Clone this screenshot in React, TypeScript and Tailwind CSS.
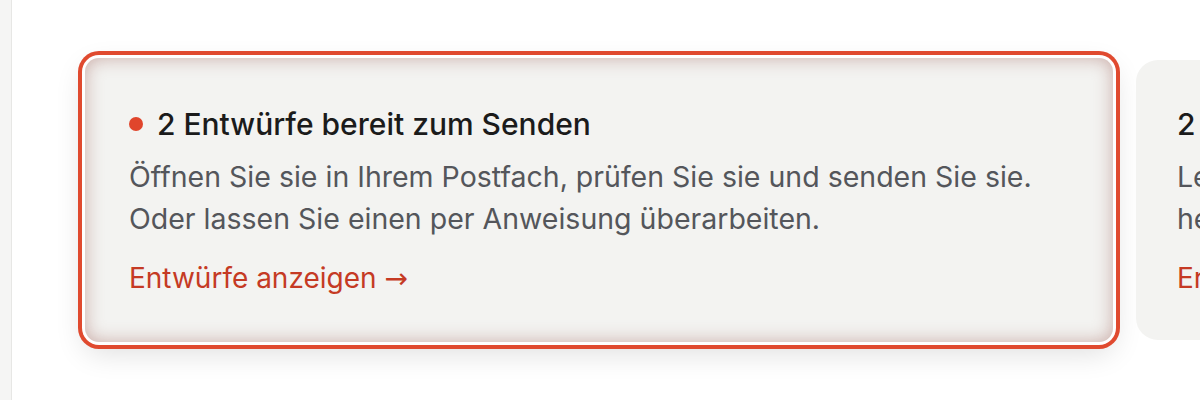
const cards = [
  {
    title: '2 Entwürfe bereit zum Senden',
    lines: [
      'Öffnen Sie sie in Ihrem Postfach, prüfen Sie sie und senden Sie sie.',
      'Oder lassen Sie einen per Anweisung überarbeiten.',
    ],
    link: 'Entwürfe anzeigen',
    active: true,
  },
  {
    title: '2 Antworten warten auf Sie',
    lines: [
      'Lesen Sie die neuen Nachrichten und antworten Sie direkt.',
      'heute noch, solange das Gespräch frisch ist.',
    ],
    link: 'Erinnerungen anzeigen',
    active: false,
  },
];

function Card({ title, lines, link, active }: (typeof cards)[number]) {
  return (
    <div
      className={
        active
          ? 'shrink-0 w-[1028px] h-[284px] rounded-[14px] bg-[#f3f3f1] px-[44px] pt-[47px] ring-4 ring-[#e04a2f] ring-offset-[3px] ring-offset-white shadow-[inset_0_0_18px_rgba(150,85,75,0.45),0_10px_30px_rgba(0,0,0,0.14)]'
          : 'shrink-0 w-[1020px] h-[280px] rounded-[22px] bg-[#f3f3f1] px-[41px] pt-[45px]'
      }
    >
      <div className="flex items-center gap-[14px]">
        {active && <span className="w-[14px] h-[14px] rounded-full bg-[#e0452c]" />}
        <h3 className="text-[30px] leading-[38px] font-medium text-[#1b1b1b] whitespace-nowrap">{title}</h3>
      </div>
      <p className="mt-[13px] text-[28.5px] leading-[42px] text-[#54565b] whitespace-nowrap">
        {lines.map((l) => (
          <span key={l} className="block">
            {l}
          </span>
        ))}
      </p>
      <a className="block mt-[18px] text-[28px] leading-[40px] text-[#c53a24] whitespace-nowrap">
        {link} <span className="font-['DejaVu_Sans',sans-serif] text-[28px]">→</span>
      </a>
    </div>
  );
}

export default function App() {
  return (
    <div className="flex h-[400px] w-[1200px] overflow-hidden bg-white font-['Inter',sans-serif]">
      <div className="w-3 shrink-0 bg-[#f5f5f4] border-r border-[#e7e7e5]" />
      <main className="flex-1 overflow-hidden pl-[73px] pt-[58px]">
        <div className="flex items-center gap-[23px] h-[284px]">
          {cards.map((c) => (
            <Card key={c.title} {...c} />
          ))}
        </div>
      </main>
    </div>
  );
}
